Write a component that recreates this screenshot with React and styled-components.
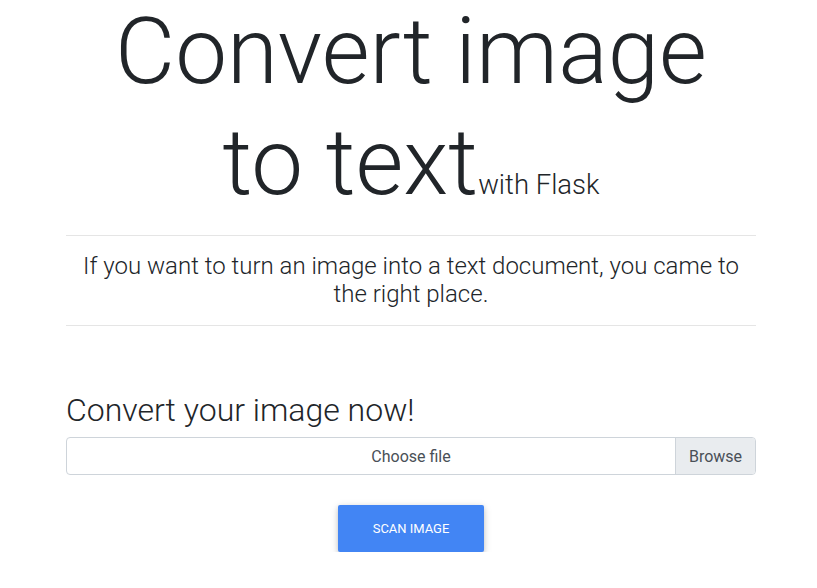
import React from "react";
import styled, { createGlobalStyle } from "styled-components";

const Global = createGlobalStyle`
  html, body { margin: 0; padding: 0; background: #fff; }
  body {
    font-family: Roboto, "Liberation Sans", sans-serif;
    font-weight: 300;
    color: #212529;
  }
`;

const Page = styled.div`
  padding-left: 5px;
`;

const Container = styled.main`
  width: 690px;
  margin: 0 auto;
  display: flex;
  flex-direction: column;
`;

const Title = styled.h1`
  margin: -4.5px 0 0;
  font-size: 92.5px;
  font-weight: 300;
  line-height: 1.2;
  text-align: center;
  color: #212529;
`;

const Small = styled.span`
  font-size: 27.5px;
  font-weight: 300;
  line-height: 1;
`;

const Rule = styled.hr`
  width: 100%;
  margin: ${(p) => p.$m};
  border: 0;
  border-top: 1px solid rgba(0, 0, 0, 0.1);
`;

const Lead = styled.p`
  margin: 0;
  font-size: 24px;
  line-height: 1.2;
  font-weight: 300;
  text-align: center;
`;

const Subtitle = styled.h3`
  margin: 65px 0 8px;
  font-size: 32px;
  line-height: 1.2;
  font-weight: 300;
`;

const FileField = styled.label`
  position: relative;
  display: flex;
  align-items: center;
  justify-content: center;
  height: 38px;
  box-sizing: border-box;
  border: 1px solid #ced4da;
  border-radius: 4px;
  font-size: 16px;
  font-weight: 400;
  color: #495057;
  cursor: pointer;
`;

const BrowseTag = styled.span`
  position: absolute;
  top: 0;
  right: 0;
  bottom: 0;
  width: 79px;
  display: flex;
  align-items: center;
  justify-content: center;
  background: #e9ecef;
  border-left: 1px solid #ced4da;
  border-radius: 0 3px 3px 0;
`;

const Actions = styled.div`
  display: flex;
  justify-content: center;
  padding-top: 30px;
`;

const ScanButton = styled.button`
  border: 0;
  border-radius: 2px;
  background: #4285f4;
  color: #fff;
  font-family: Roboto, "Liberation Sans", sans-serif;
  font-size: 12.96px;
  font-weight: 400;
  text-transform: uppercase;
  line-height: 1.5;
  padding: 13.5px 34.5px;
  box-shadow: 0 2px 5px 0 rgba(0, 0, 0, 0.16), 0 2px 10px 0 rgba(0, 0, 0, 0.12);
  cursor: pointer;
`;

export default function App() {
  return (
    <Page>
      <Global />
      <Container>
        <Title>
          Convert image to text<Small>with Flask</Small>
        </Title>
        <Rule $m="17px 0 16px" />
        <Lead>
          If you want to turn an image into a text document, you came to the right place.
        </Lead>
        <Rule $m="16px 0 0" />
        <Subtitle>Convert your image now!</Subtitle>
        <FileField>
          Choose file
          <BrowseTag>Browse</BrowseTag>
        </FileField>
        <Actions>
          <ScanButton>Scan image</ScanButton>
        </Actions>
      </Container>
    </Page>
  );
}
